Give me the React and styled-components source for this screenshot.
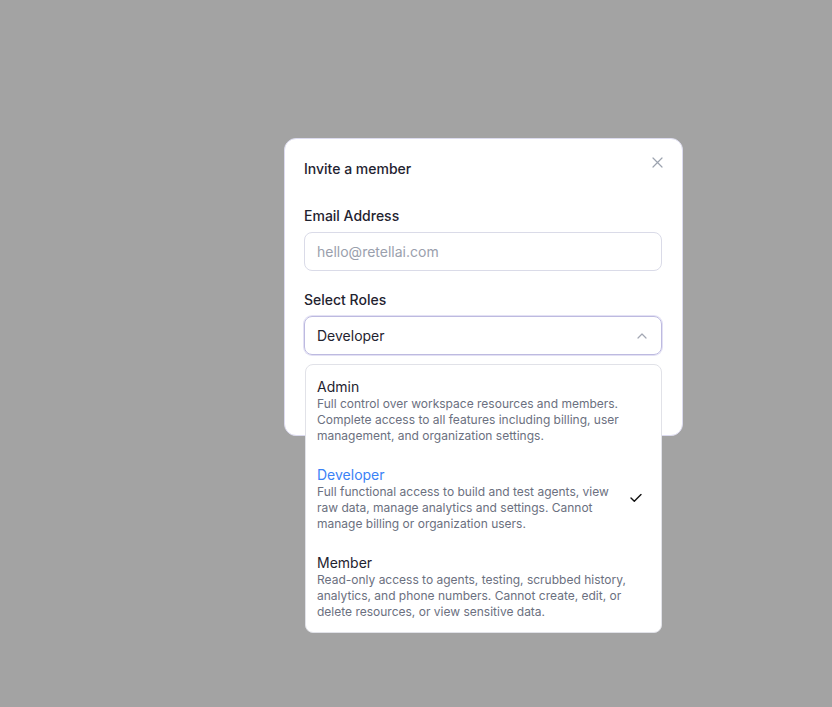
import React from "react";
import styled, { createGlobalStyle } from "styled-components";

const GlobalStyle = createGlobalStyle`
  html, body {
    margin: 0;
    padding: 0;
    background: #a3a3a3;
    font-family: Inter, "Noto Sans", "Liberation Sans", sans-serif;
    -webkit-font-smoothing: antialiased;
  }
`;

const Backdrop = styled.div`
  width: 832px;
  height: 707px;
  background: #a3a3a3;
  padding: 138px 0 0 284px;
  box-sizing: border-box;
`;

const Modal = styled.div`
  width: 399px;
  box-sizing: border-box;
  background: #fff;
  border: 1px solid #dcdbef;
  border-radius: 12px;
  padding: 20px 20px 0 19px;
  height: 298px;
  position: relative;
`;

const Header = styled.div`
  display: flex;
  justify-content: space-between;
  align-items: flex-start;
`;

const Title = styled.h2`
  margin: 0;
  font-size: 14px;
  line-height: 20px;
  font-weight: 500;
  color: #1f2330;
`;

const Close = styled.button`
  border: none;
  background: none;
  padding: 0;
  margin: -5px -3px 0 0;
  width: 16px;
  height: 16px;
  display: flex;
  align-items: center;
  justify-content: center;
  cursor: pointer;
`;

const Field = styled.div`
  display: flex;
  flex-direction: column;
  gap: 7px;
  margin-top: ${(p) => p.top}px;
  position: relative;
`;

const Label = styled.label`
  font-size: 14px;
  line-height: 18px;
  font-weight: 500;
  color: #1f2330;
`;

const Input = styled.input`
  height: 39px;
  box-sizing: border-box;
  border: 1px solid #dadbe8;
  border-radius: 8px;
  padding: 0 12px;
  font-family: inherit;
  font-size: 14px;
  color: #1f2330;
  outline: none;
  &::placeholder {
    color: #9aa0ad;
  }
`;

const Trigger = styled.div`
  height: 39px;
  box-sizing: border-box;
  border: 1px solid #bdbae0;
  box-shadow: 0 0 0 1px #e3e1f4;
  border-radius: 8px;
  padding: 0 14px 0 12px;
  display: flex;
  align-items: center;
  justify-content: space-between;
  font-size: 14px;
  color: #1f2330;
`;

const Menu = styled.ul`
  position: absolute;
  top: 73px;
  left: 1px;
  width: 357px;
  box-sizing: border-box;
  margin: 0;
  padding: 1px 0 2px;
  list-style: none;
  background: #fff;
  border: 1px solid #e1e2e8;
  border-radius: 8px;
  z-index: 10;
`;

const Item = styled.li`
  position: relative;
  padding: 12px 32px 10px 11px;
`;

const ItemTitle = styled.div`
  font-size: 14px;
  line-height: 18px;
  color: ${(p) => (p.active ? "#3b82f6" : "#1f2330")};
`;

const ItemDesc = styled.div`
  font-size: 12px;
  line-height: 16px;
  color: #6b7080;
`;

const Check = styled.span`
  position: absolute;
  right: 19px;
  top: 50%;
  transform: translateY(-50%);
  display: flex;
`;

const roles = [
  {
    name: "Admin",
    desc: "Full control over workspace resources and members. Complete access to all features including billing, user management, and organization settings.",
  },
  {
    name: "Developer",
    desc: "Full functional access to build and test agents, view raw data, manage analytics and settings. Cannot manage billing or organization users.",
  },
  {
    name: "Member",
    desc: "Read-only access to agents, testing, scrubbed history, analytics, and phone numbers. Cannot create, edit, or delete resources, or view sensitive data.",
  },
];

export default function App() {
  const selected = "Developer";
  return (
    <>
      <GlobalStyle />
      <Backdrop>
        <Modal>
          <Header>
            <Title>Invite a member</Title>
            <Close aria-label="Close">
              <svg width="11" height="11" viewBox="0 0 11 11" fill="none">
                <path d="M1 1l9 9M10 1l-9 9" stroke="#9ca3af" strokeWidth="1.2" strokeLinecap="round" />
              </svg>
            </Close>
          </Header>

          <Field top={28}>
            <Label>Email Address</Label>
            <Input placeholder="hello@retellai.com" />
          </Field>

          <Field top={20}>
            <Label>Select Roles</Label>
            <Trigger>
              <span>{selected}</span>
              <svg width="10" height="6" viewBox="0 0 10 6" fill="none">
                <path d="M1 5l4-4 4 4" stroke="#a3a7b3" strokeWidth="1.2" strokeLinecap="round" strokeLinejoin="round" />
              </svg>
            </Trigger>
            <Menu>
              {roles.map((r) => (
                <Item key={r.name}>
                  <ItemTitle active={r.name === selected}>{r.name}</ItemTitle>
                  <ItemDesc>{r.desc}</ItemDesc>
                  {r.name === selected && (
                    <Check>
                      <svg width="12" height="9" viewBox="0 0 12 9" fill="none">
                        <path d="M1 4.5l3.3 3.3L11 1" stroke="#111" strokeWidth="1.4" strokeLinecap="round" strokeLinejoin="round" />
                      </svg>
                    </Check>
                  )}
                </Item>
              ))}
            </Menu>
          </Field>
        </Modal>
      </Backdrop>
    </>
  );
}
